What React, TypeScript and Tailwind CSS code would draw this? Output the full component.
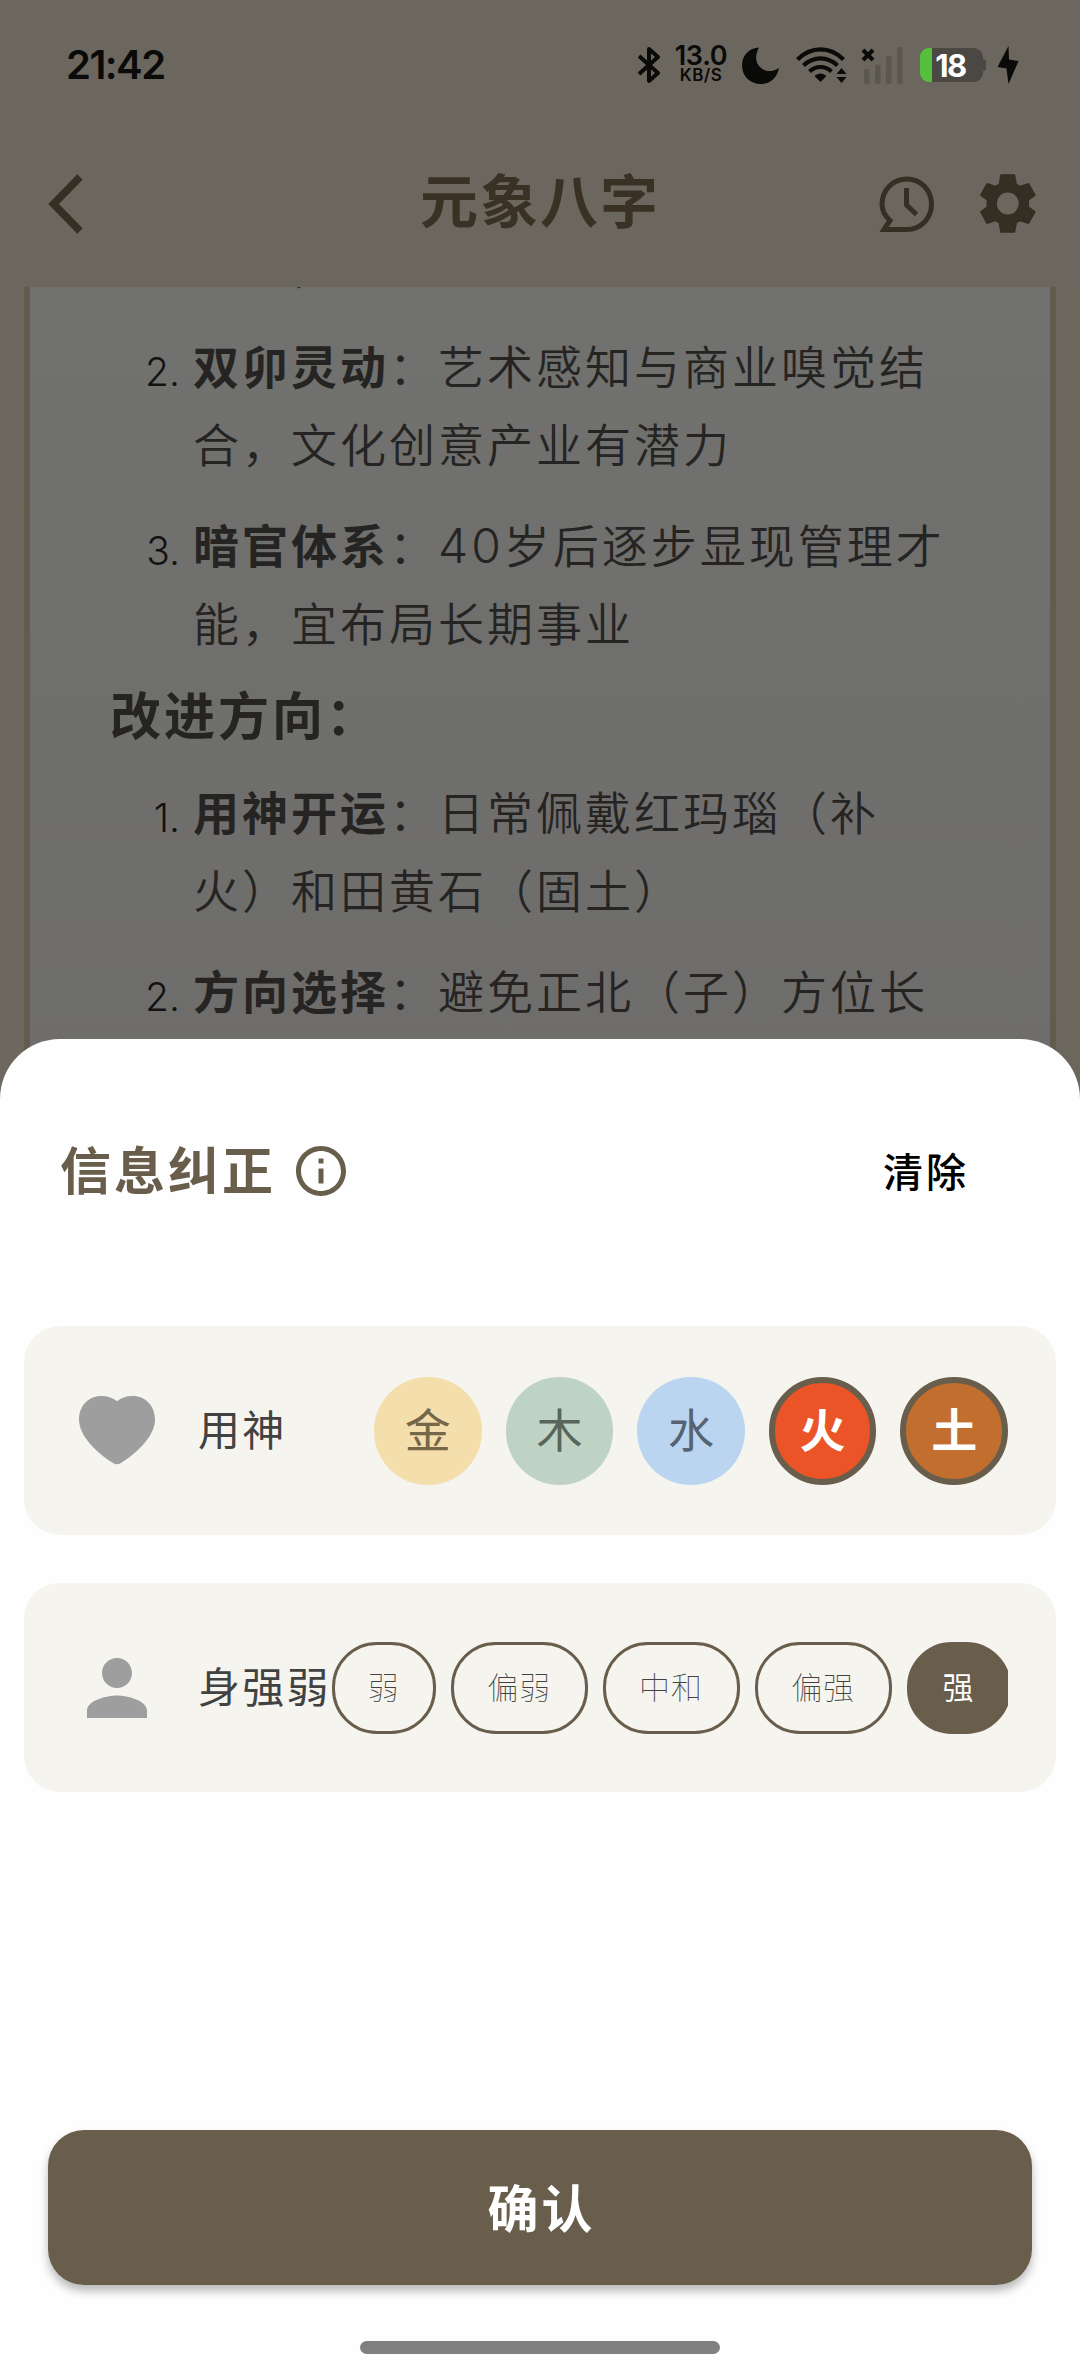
import { useState } from "react";
import clsx from "clsx";
import { MdInfoOutline, MdPerson } from "react-icons/md";

interface ListItem {
  no: string;
  title: string;
  lines: string[];
}

const ADVANTAGES: ListItem[] = [
  { no: "2.", title: "双卯灵动", lines: ["艺术感知与商业嗅觉结", "合，文化创意产业有潜力"] },
  { no: "3.", title: "暗官体系", lines: ["40岁后逐步显现管理才", "能，宜布局长期事业"] },
];

const IMPROVEMENTS: ListItem[] = [
  { no: "1.", title: "用神开运", lines: ["日常佩戴红玛瑙（补", "火）和田黄石（固土）"] },
  { no: "2.", title: "方向选择", lines: ["避免正北（子）方位长"] },
];

const ELEMENTS = [
  { name: "金", idle: "bg-[#f4dfac] text-[#75684a]", active: "bg-[#d9a520]" },
  { name: "木", idle: "bg-[#bfd3c4] text-[#57655b]", active: "bg-[#2e8b57]" },
  { name: "水", idle: "bg-[#bbd5f1] text-[#556372]", active: "bg-[#1e80e0]" },
  { name: "火", idle: "bg-[#f6c3b2] text-[#75523f]", active: "bg-[#ea5427]" },
  { name: "土", idle: "bg-[#e5c6ab] text-[#6b5039]", active: "bg-[#c26e2f]" },
];

const STRENGTHS = ["弱", "偏弱", "中和", "偏强", "强"];

function StatusBar() {
  return (
    <div className="flex h-[130px] items-center pl-[66px] text-[#0a0a08]">
      <span className="w-[571px] pb-[1px] font-['Inter'] text-[40px] leading-none font-semibold tracking-[-1.5px]">21:42</span>

      {/* Bluetooth */}
      <svg className="h-[38px] w-[24px] shrink-0" viewBox="0 0 24 38" fill="none" stroke="currentColor" strokeWidth="4" strokeLinejoin="round">
        <path d="M2 10 L21 27 L12 35 V3 L21 11 L2 28" />
      </svg>

      {/* Network speed */}
      <div className="ml-[12px] flex w-[56px] shrink-0 flex-col items-center font-['Inter'] font-semibold">
        <span className="text-[27px] leading-[21px] tracking-[-0.3px]">13.0</span>
        <span className="text-[17px] leading-[19px] tracking-[0.4px]">KB/S</span>
      </div>

      {/* Do not disturb moon */}
      <svg className="ml-[13px] h-[37px] w-[38px] shrink-0" viewBox="0 0 38 37" fill="currentColor">
        <path d="M17 0.5 C13 8 13 15 18 20 C23 25 30 25.500 37 21 C35 31 28 37 19 37 C8 37 0 29 0 18.500 C0 8.500 7 1 17 0.500Z" />
      </svg>

      {/* Wifi with transfer arrows */}
      <svg className="ml-[16px] h-[36px] w-[51px] shrink-0" viewBox="0 0 51 36" fill="none" stroke="currentColor" strokeWidth="4.200">
        <path d="M1.500 12.500 C15 -1 34 -1 47.500 12.500" />
        <path d="M7.500 18.500 C17.500 9 31.500 9 41.500 18.500" />
        <path d="M13.500 24.500 C20 18.500 29 18.500 35.500 24.500" />
        <path d="M24.500 35 L18.500 29 C22 25.500 27 25.500 30.500 29Z" fill="currentColor" stroke="none" />
        <path d="M40.500 27 L45.500 21 L50.500 27Z M40.500 30 L45.500 36 L50.500 30Z" fill="currentColor" stroke="none" />
      </svg>

      {/* No sim signal */}
      <svg className="ml-[14px] h-[37px] w-[43px] shrink-0" viewBox="0 0 43 37">
        <path d="M2 3 L12 13 M12 3 L2 13" stroke="currentColor" strokeWidth="4" />
        <g fill="#5a5751">
          <rect x="3" y="22" width="5.500" height="15" rx="2" />
          <rect x="14" y="17.500" width="5.500" height="19.500" rx="2" />
          <rect x="25" y="9" width="5.500" height="28" rx="2" />
          <rect x="36" y="0" width="5.500" height="37" rx="2" />
        </g>
      </svg>

      {/* Battery */}
      <div className="ml-[16px] flex shrink-0 items-center">
        <div className="flex h-[34px] w-[63px] items-center justify-center overflow-hidden rounded-[9px] bg-gradient-to-r from-[#56bf3b] from-[18.500%] to-[#4b4743] to-[18.500%] pr-[2px] font-['Inter'] text-[31px] leading-none font-bold tracking-[-1.500px] text-white">
          18
        </div>
        <div className="h-[12px] w-[3px] rounded-r-[3px] bg-[#4b4743]" />
      </div>

      <svg className="ml-[11px] h-[38px] w-[22px] shrink-0" viewBox="0 0 22 38" fill="currentColor">
        <path d="M11.500 0 L0.500 21 L9.500 22.500 L11.500 38 L21.500 15 L12 13.500Z" />
      </svg>
    </div>
  );
}

function NavBar() {
  return (
    <div className="flex h-[157px] items-center pb-[10px] pl-[44px] text-[#352e23]">
      <svg className="h-[60px] w-[40px] shrink-0" viewBox="0 0 40 60" fill="none" stroke="currentColor" strokeWidth="7.500">
        <path d="M36 3 L9.500 30 L36 57" />
      </svg>
      <h1 className="mb-[11px] ml-[336px] w-[248px] text-[58px] leading-none font-bold tracking-[2px] text-[#3a3125]">元象八字</h1>
      {/* History bubble */}
      <svg className="ml-[209px] h-[58px] w-[58px] shrink-0" viewBox="0 0 58 58" fill="none" stroke="currentColor" strokeWidth="5">
        <path d="M30 54.500 H7 L13 45.500 C8 41 5 36 5 29 C5 15 16 4 30 4 C43.500 4 54.500 15 54.500 29 C54.500 43.500 43.500 54.500 30 54.500Z" />
        <path d="M29.500 13 V30 L39.500 39.500" />
      </svg>
      {/* Settings gear */}
      <svg className="ml-[45px] h-[59px] w-[56px] shrink-0" viewBox="0 0 56 59" fill="currentColor" stroke="currentColor" strokeWidth="1.500" strokeLinejoin="round">
        <path
          fillRule="evenodd"
          d="M21 1 H34.500 L36.200 10.500 L40 12.500 L48.500 9.800 L55 21.200 L48.300 26 V33 L55 37.800 L48.500 49.200 L40 46.500 L36.200 48.500 L34.500 58 H21 L19.300 48.500 L15.500 46.500 L7 49.200 L0.800 37.800 L7.300 33 V26 L0.800 21.200 L7 9.800 L15.500 12.500 L19.300 10.500Z M27.800 17.800 A11.700 11.700 0 1 0 27.800 41.200 A11.700 11.700 0 1 0 27.800 17.800Z"
        />
      </svg>
    </div>
  );
}

function AnalysisItem({ item }: { item: ListItem }) {
  return (
    <li className="mb-[23px] flex">
      <span className="w-[83px] shrink-0 pt-[8px] pr-[13px] text-right font-['Inter'] text-[39px] leading-[78px] font-light tracking-normal text-[#121212]">
        {item.no}
      </span>
      <div className="-mr-[20px]">
        {item.lines.map((line, i) => (
          <p key={line} className="h-[78px] whitespace-nowrap">
            {i === 0 && (
              <>
                <strong className="font-bold">{item.title}</strong>：
              </>
            )}
            {line.startsWith("40") ? (
              <>
                <span className="font-['Inter'] text-[48px] leading-none tracking-[3px]">40</span>
                {line.slice(2)}
              </>
            ) : (
              line
            )}
          </p>
        ))}
      </div>
    </li>
  );
}

function Analysis() {
  return (
    <div className="flex h-[800px] justify-center bg-gradient-to-r from-[#6d685f] via-[#6a665a] to-[#6b675c]">
      <div className="w-[1032px] overflow-hidden border-x-[6px] border-[#625c4c] bg-gradient-to-b from-[#71716f] to-[#6e6d6b] pl-[80px] text-[46px] leading-[78px] font-[350] tracking-[3px] text-[#252423]">
        {/* tail of the line scrolled under the nav bar */}
        <p className="-mt-[63px] mb-[23px] pl-[181px]">，</p>
        <ul>
          {ADVANTAGES.map((item) => (
            <AnalysisItem key={item.title} item={item} />
          ))}
        </ul>
        <h2 className="-mt-[22px] mb-[6px] text-[51px] leading-[104px] font-bold">改进方向：</h2>
        <ul>
          {IMPROVEMENTS.map((item) => (
            <AnalysisItem key={item.title} item={item} />
          ))}
        </ul>
      </div>
    </div>
  );
}

function CorrectionSheet() {
  const [elements, setElements] = useState(["火", "土"]);
  const [strength, setStrength] = useState("强");

  const toggleElement = (name: string) => {
    setElements((prev) => (prev.includes(name) ? prev.filter((e) => e !== name) : [...prev, name]));
  };

  const clear = () => {
    setElements([]);
    setStrength("");
  };

  return (
    <section className="absolute inset-x-0 bottom-0 flex h-[1336px] flex-col rounded-t-[60px] bg-[#fefefe]">
      <div className="mt-[87px] flex h-[90px] items-center pr-[111px] pl-[60px]">
        <h2 className="mb-[5px] text-[51px] leading-none font-bold tracking-[3px] text-[#695d4b]">信息纠正</h2>
        <MdInfoOutline className="ml-[15px] h-[60px] w-[60px] text-[#695d4b]" />
        <button onClick={clear} className="mb-[2px] ml-auto text-[40px] leading-none font-medium tracking-[3px] text-black">
          清除
        </button>
      </div>

      <div className="mt-[110px] flex flex-col gap-[48px] px-[24px]">
        <div className="flex h-[209px] items-center rounded-[36px] bg-[#f5f4ee] pr-[48px] pl-[55px]">
          <svg className="h-[69px] w-[76px] shrink-0" viewBox="0 0 76 69" fill="#9e9e9e">
            <path d="M38 5.300 C34 2 29 0 22.500 0 C9 0 0 10.500 0 23.500 C0 40 18 57 34 67 Q38 69.500 42 67 C58 57 76 40 76 23.500 C76 10.500 67 0 53.500 0 C47 0 42 2 38 5.300Z" />
          </svg>
          <span className="mb-[6px] ml-[43px] text-[42px] leading-none tracking-[2.300px] text-[#424242]">用神</span>
          <div className="ml-auto flex gap-[24px]">
            {ELEMENTS.map((el) => {
              const selected = elements.includes(el.name);
              return (
                <button
                  key={el.name}
                  onClick={() => toggleElement(el.name)}
                  className={clsx(
                    "flex h-[108px] w-[107.600px] items-center justify-center rounded-full pb-[7px] text-[46px] leading-none",
                    selected ? "border-[6px] border-[#695d4b] font-bold text-white" : "font-normal",
                    selected ? el.active : el.idle
                  )}
                >
                  {el.name}
                </button>
              );
            })}
          </div>
        </div>

        <div className="flex h-[209px] items-center rounded-[36px] bg-[#f5f4ee] pr-[48px] pl-[48px]">
          <MdPerson className="h-[90px] w-[90px] shrink-0 text-[#9e9e9e]" />
          <span className="mb-[6px] ml-[36px] w-[133.500px] shrink-0 text-[42px] leading-none tracking-[2.300px] whitespace-nowrap text-[#424242]">
            身强弱
          </span>
          <div className="flex flex-1 gap-[15px] overflow-hidden">
            {STRENGTHS.map((s) => (
              <button
                key={s}
                onClick={() => setStrength(s)}
                className={clsx(
                  "flex h-[92px] shrink-0 items-center justify-center rounded-[45px] border-[3px] border-[#695d4b] pb-[4px] text-[31px] leading-none tracking-[1px]",
                  s.length === 1 ? "w-[104px]" : "w-[137px]",
                  s === strength ? "bg-[#695d4b] font-[350] text-white" : "font-thin text-[#424242]"
                )}
              >
                {s}
              </button>
            ))}
          </div>
        </div>
      </div>

      <button className="mx-[48px] mt-[338px] h-[155px] rounded-[36px] bg-[#695d4b] pb-[3px] pl-[3px] text-[51px] leading-none font-bold tracking-[3px] text-white shadow-[0_6px_10px_rgba(0,0,0,0.28)]">
        确认
      </button>

      {/* Home indicator */}
      <div className="mx-auto mt-[56px] h-[13px] w-[360px] rounded-full bg-[#808080]" />
    </section>
  );
}

export default function App() {
  return (
    <main className="relative h-[2375px] w-[1080px] overflow-hidden bg-[#6b675f] font-['Noto_Sans_CJK_SC',sans-serif]">
      <StatusBar />
      <NavBar />
      <Analysis />
      <CorrectionSheet />
    </main>
  );
}
